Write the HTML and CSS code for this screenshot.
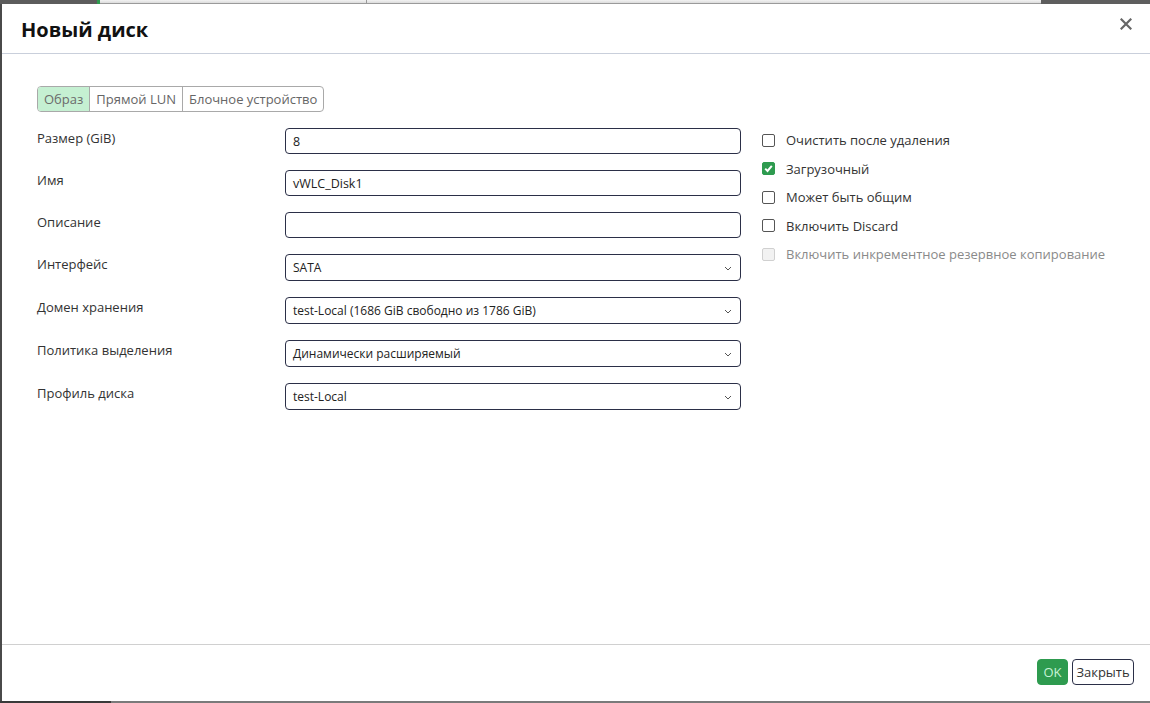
FILE: index.html
```html
<!DOCTYPE html>
<html lang="ru">
<head>
<meta charset="utf-8">
<title>Новый диск</title>
<link rel="stylesheet" href="styles.css">
</head>
<body>
<div class="topbar">
  <div class="tb-dark"></div>
  <div class="tb-green"></div>
  <div class="tb-light tb-a"></div>
  <div class="tb-light tb-b"></div>
  <div class="tb-arrow"></div>
  <div class="tb-dark2"></div>
</div>
<div class="stage">
  <div class="edge"></div>
  <div class="dialog">
    <div class="header">
      <h1 class="title">Новый диск</h1>
      <svg class="close" width="12" height="12" viewBox="0 0 12 12"><path d="M1.5 1.5 L10.5 10.5 M10.5 1.5 L1.5 10.5" stroke="#666" stroke-width="2.2" stroke-linecap="square"/></svg>
    </div>
    <div class="body">
      <div class="tabs">
        <span class="tab active">Образ</span>
        <span class="tab">Прямой LUN</span>
        <span class="tab">Блочное устройство</span>
      </div>
      <div class="form">
        <div class="fields">
          <div class="row"><span class="label">Размер (GiB)</span><div class="input">8</div></div>
          <div class="row"><span class="label">Имя</span><div class="input">vWLC_Disk1</div></div>
          <div class="row"><span class="label">Описание</span><div class="input"></div></div>
          <div class="row"><span class="label">Интерфейс</span><div class="input select">SATA<svg class="chev" width="8" height="5" viewBox="0 0 8 5"><path d="M1 1 L4 4 L7 1" fill="none" stroke="#555" stroke-width="1"/></svg></div></div>
          <div class="row"><span class="label">Домен хранения</span><div class="input select">test-Local (1686 GiB свободно из 1786 GiB)<svg class="chev" width="8" height="5" viewBox="0 0 8 5"><path d="M1 1 L4 4 L7 1" fill="none" stroke="#555" stroke-width="1"/></svg></div></div>
          <div class="row"><span class="label">Политика выделения</span><div class="input select">Динамически расширяемый<svg class="chev" width="8" height="5" viewBox="0 0 8 5"><path d="M1 1 L4 4 L7 1" fill="none" stroke="#555" stroke-width="1"/></svg></div></div>
          <div class="row"><span class="label">Профиль диска</span><div class="input select">test-Local<svg class="chev" width="8" height="5" viewBox="0 0 8 5"><path d="M1 1 L4 4 L7 1" fill="none" stroke="#555" stroke-width="1"/></svg></div></div>
        </div>
        <div class="checks">
          <div class="check"><span class="box"></span><span>Очистить после удаления</span></div>
          <div class="check"><span class="box checked"><svg width="11" height="11" viewBox="0 0 11 11"><path d="M2.2 5.6 L4.5 7.9 L8.8 2.8" fill="none" stroke="#fff" stroke-width="2"/></svg></span><span>Загрузочный</span></div>
          <div class="check"><span class="box"></span><span>Может быть общим</span></div>
          <div class="check"><span class="box"></span><span>Включить Discard</span></div>
          <div class="check disabled"><span class="box"></span><span>Включить инкрементное резервное копирование</span></div>
        </div>
      </div>
    </div>
    <div class="footer">
      <button class="btn ok">OK</button>
      <button class="btn close-btn">Закрыть</button>
    </div>
  </div>
</div>
<div class="bottombar">
  <div class="bb-dark"></div>
  <div class="bb-gray"></div>
</div>
</body>
</html>
```
FILE: styles.css
```css
html, body {
  margin: 0;
  padding: 0;
}
body {
  width: 1150px;
  height: 703px;
  overflow: hidden;
  display: flex;
  flex-direction: column;
  font-family: "Open Sans", "Noto Sans", sans-serif;
  font-size: 13px;
  color: #333;
  background: #5a5a5a;
}
.topbar {
  height: 4px;
  display: flex;
  flex: none;
}
.tb-dark { width: 97px; background: #5c5c5c; }
.tb-green { width: 3px; background: #2e9b4f; }
.tb-light { background: linear-gradient(#f2f2f2, #dcdcdc); border-bottom: 1px solid #9a9a9a; }
.tb-a { width: 266px; border-right: 1px solid #999; }
.tb-b { width: 666px; }
.tb-arrow { width: 8px; background: linear-gradient(#f2f2f2, #dcdcdc); border-bottom: 1px solid #9a9a9a; }
.tb-dark2 { flex: 1; background: #5e5e5e; }

.stage {
  flex: 1;
  display: flex;
  min-height: 0;
}
.edge {
  width: 2px;
  background: #4a4a4a;
}
.dialog {
  flex: 1;
  background: #fff;
  display: flex;
  flex-direction: column;
}
.header {
  height: 49px;
  border-bottom: 1px solid #c9cfdb;
  display: flex;
  align-items: center;
  justify-content: space-between;
  padding: 0 18px 0 19px;
  flex: none;
}
.title {
  margin: 0;
  font-size: 20px;
  font-weight: 700;
  color: #111;
  padding-top: 2px;
}
.close {
  margin-top: -10px;
}
.body {
  flex: 1;
  padding: 32px 0 0 35px;
}
.tabs {
  display: inline-flex;
  border: 1px solid #a9a9a9;
  border-radius: 4px;
  overflow: hidden;
  height: 24px;
}
.tab {
  display: flex;
  align-items: center;
  padding: 0 6px;
  color: #666;
  border-left: 1px solid #a9a9a9;
  font-size: 13px;
}
.tab:first-child { border-left: none; }
.tab.active {
  background: #c5f0d2;
  color: #6b6b6b;
}
.form {
  display: flex;
  margin-top: 16px;
}
.fields {
  width: 704px;
}
.row {
  display: grid;
  grid-template-columns: 248px 456px;
  margin-bottom: 16px;
}
.label {
  line-height: 18px;
  padding-top: 1px;
  color: #333;
}
.input {
  box-sizing: border-box;
  height: 26px;
  border: 1px solid #2b2f47;
  border-radius: 4px;
  padding: 0 7px;
  display: flex;
  align-items: center;
  color: #222;
  font-size: 12.5px;
}
.select {
  height: 27px;
  justify-content: space-between;
  padding-right: 8px;
  font-size: 12px;
}
.chev { margin-top: 1px; }
.checks {
  margin-left: 21px;
  padding-top: 0;
  margin-top: -2px;
}
.check {
  display: flex;
  align-items: center;
  height: 28.5px;
  color: #333;
}
.box {
  box-sizing: border-box;
  width: 13px;
  height: 13px;
  border: 1px solid #555;
  border-radius: 2px;
  margin-right: 11px;
  display: flex;
  align-items: center;
  justify-content: center;
  background: #fff;
}
.box.checked {
  background: #2e9b4f;
  border-color: #2e9b4f;
}
.check.disabled { color: #8a8a8a; }
.check.disabled .box {
  border-color: #d0d0d0;
  background: #f2f2f2;
}
.footer {
  height: 57px;
  box-sizing: border-box;
  border-top: 1px solid #d0d0d0;
  display: flex;
  justify-content: flex-end;
  align-items: flex-start;
  padding: 14px 16px 0 0;
  gap: 4px;
  flex: none;
}
.btn {
  font-family: "Open Sans", "Noto Sans", sans-serif;
  font-size: 13px;
  height: 26px;
  border-radius: 4px;
  cursor: pointer;
}
.ok {
  background: #2e9b4f;
  border: 1px solid #2e9b4f;
  color: #c8f2d6;
  width: 31px;
  padding: 0;
}
.close-btn {
  background: #fff;
  border: 1px solid #2b2f47;
  color: #333;
  width: 62px;
  padding: 0;
}
.bottombar {
  height: 2px;
  display: flex;
  flex: none;
}
.bb-dark { width: 111px; background: #3a3a3a; }
.bb-gray { flex: 1; background: #7a7a7a; }
```
